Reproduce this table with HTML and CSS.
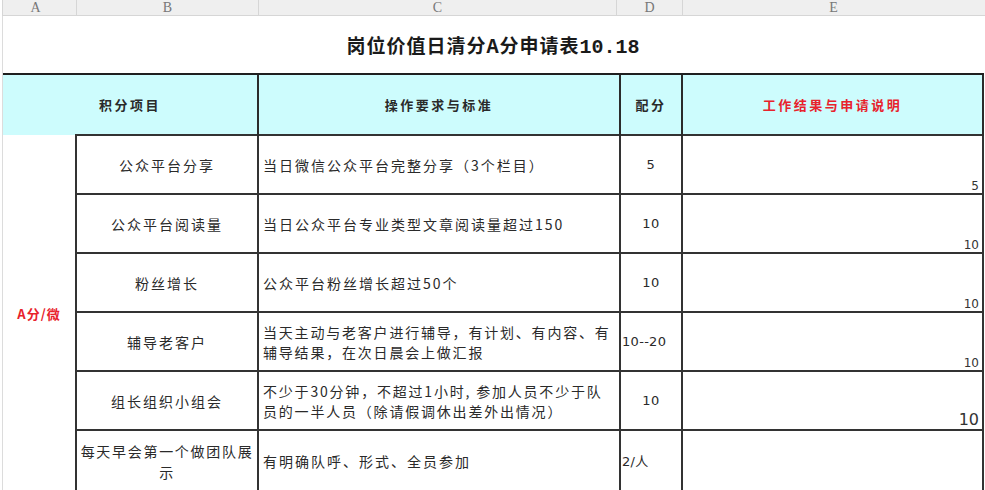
FILE: index.html
```html
<!DOCTYPE html>
<html lang="zh-CN">
<head>
<meta charset="utf-8">
<title>岗位价值日清分A分申请表10.18</title>
<link rel="stylesheet" href="styles.css">
</head>
<body>
<div class="colhead">
  <div class="ch">A</div>
  <div class="ch">B</div>
  <div class="ch">C</div>
  <div class="ch">D</div>
  <div class="ch last">E</div>
</div>
<div class="wrap">
<table class="sheet">
  <colgroup>
    <col class="c-a"><col class="c-b"><col class="c-c"><col class="c-d"><col class="c-e">
  </colgroup>
  <tr class="r-title">
    <td colspan="5" class="title">岗位价值日清分A分申请表<span class="num">10.18</span></td>
  </tr>
  <tr class="r-head">
    <td colspan="2" class="hd hd-ab">积分项目</td>
    <td class="hd">操作要求与标准</td>
    <td class="hd">配分</td>
    <td class="hd hd-red hd-e">工作结果与申请说明</td>
  </tr>
  <tr class="r-data">
    <td rowspan="6" class="cat">A分/微</td>
    <td class="item">公众平台分享</td>
    <td class="req">当日微信公众平台完整分享（3个栏目）</td>
    <td class="pts">5</td>
    <td class="res">5</td>
  </tr>
  <tr class="r-data">
    <td class="item">公众平台阅读量</td>
    <td class="req">当日公众平台专业类型文章阅读量超过150</td>
    <td class="pts">10</td>
    <td class="res">10</td>
  </tr>
  <tr class="r-data">
    <td class="item">粉丝增长</td>
    <td class="req">公众平台粉丝增长超过50个</td>
    <td class="pts">10</td>
    <td class="res">10</td>
  </tr>
  <tr class="r-data">
    <td class="item">辅导老客户</td>
    <td class="req two">当天主动与老客户进行辅导，有计划、有内容、有<br>辅导结果，在次日晨会上做汇报</td>
    <td class="pts left">10--20</td>
    <td class="res">10</td>
  </tr>
  <tr class="r-data">
    <td class="item">组长组织小组会</td>
    <td class="req two">不少于30分钟，不超过1小时, 参加人员不少于队<br>员的一半人员（除请假调休出差外出情况）</td>
    <td class="pts">10</td>
    <td class="res big">10</td>
  </tr>
  <tr class="r-data">
    <td class="item two">每天早会第一个做团队展<br>示</td>
    <td class="req">有明确队呼、形式、全员参加</td>
    <td class="pts left">2/人</td>
    <td class="res"></td>
  </tr>
</table>
</div>
</body>
</html>
```

FILE: styles.css
```css
html, body {
  margin: 0;
  padding: 0;
  background: #ffffff;
}
body {
  font-family: "Noto Sans CJK SC", "Noto Sans", sans-serif;
  color: #222;
  width: 985px;
  height: 490px;
  overflow: hidden;
}
.colhead {
  display: grid;
  grid-template-columns: 74px 182px 358px 66px 301px;
  height: 16px;
  background: #efefef;
  border-bottom: 1px solid #d6d6d6;
  border-left: 1px solid #d6d6d6;
  margin-left: 2px;
  box-sizing: border-box;
}
.colhead .ch {
  border-right: 1px solid #d6d6d6;
  text-align: center;
  font-family: "Liberation Serif", serif;
  font-size: 14px;
  line-height: 15px;
  color: #777;
}
.colhead .ch:first-child { padding-right: 8px; }
.colhead .ch.last { border-right: none; }

.wrap {
  margin-left: 2px;
  border-left: 1px solid #dcdcdc;
  width: 981px;
}
.sheet {
  border-collapse: collapse;
  table-layout: fixed;
  width: 980px;
}
.c-a { width: 73px; }
.c-b { width: 182px; }
.c-c { width: 362px; }
.c-d { width: 62px; }
.c-e { width: 301px; }

.sheet td {
  padding: 0;
  font-size: 14px;
  letter-spacing: 2px;
}
.r-title td {
  height: 57px;
  border-bottom: 2px solid #1f1f1f;
}
.title {
  text-align: center;
  font-weight: bold;
  font-size: 19px !important;
  letter-spacing: 1px !important;
  color: #1a1a1a;
}
.title .num {
  font-family: "Liberation Mono", monospace;
  font-size: 20px;
  letter-spacing: 0;
}
.r-head td {
  height: 59px;
  background: #cdfcfd;
}
.hd {
  text-align: center;
  font-weight: bold;
  font-size: 13px !important;
  letter-spacing: 2.5px !important;
  color: #2a2a2a;
  border-right: 2px solid #2b2b2b;
  border-bottom: none;
}
.hd-red { color: #e8222c; }
.hd-e { border-right: 2px solid #2b2b2b; }

.r-data td {
  height: 57px;
  border: 2px solid #333;
}
.r-data td.cat {
  border: none;
  border-right: 2px solid #333;
  text-align: center;
  color: #e8222c;
  font-weight: bold;
  font-size: 13px;
  letter-spacing: 1px;
}
.item {
  text-align: center;
  color: #2a2a2a;
}
.item.two {
  line-height: 21px;
  padding-top: 2px;
  letter-spacing: 1.7px;
}
.req {
  padding-left: 4px !important;
  color: #2a2a2a;
  white-space: nowrap;
}
.req.two { line-height: 20px; letter-spacing: 1.8px; }
.pts {
  text-align: center;
  font-family: "DejaVu Sans", sans-serif;
  font-size: 13px !important;
  letter-spacing: 0.5px !important;
  color: #2a2a2a;
}
.pts.left {
  text-align: left;
  padding-left: 1px !important;
  font-family: "DejaVu Sans", "Noto Sans CJK SC", sans-serif;
  letter-spacing: 0.3px !important;
}
.res {
  text-align: right;
  vertical-align: bottom;
  font-family: "DejaVu Sans", sans-serif;
  font-size: 12px !important;
  letter-spacing: 0 !important;
  line-height: 14px;
  padding-right: 3px !important;
  padding-bottom: 0 !important;
  color: #333;
}
.res.big {
  font-size: 16px !important;
  line-height: 18px;
}
```
